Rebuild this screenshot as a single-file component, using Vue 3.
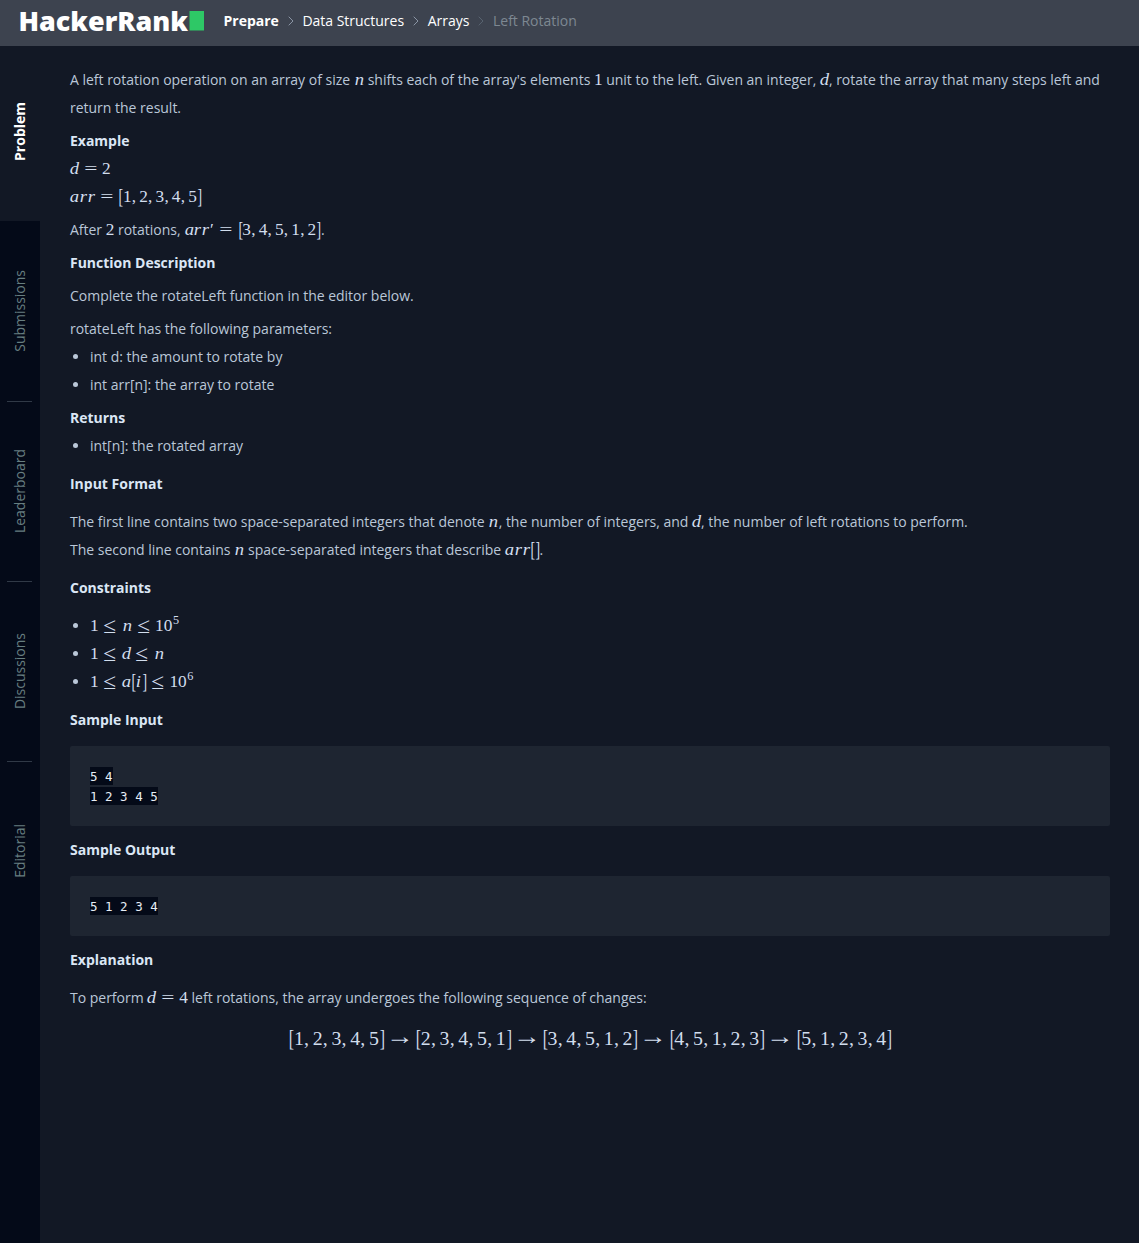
<script setup>
import { h } from 'vue'

const tabs = ['Problem', 'Submissions', 'Leaderboard', 'Discussions', 'Editorial']

const kinds = { '=': 'rel eq', '≤': 'rel le', '→': 'rel to', ',': 'comma', '[': 'br', ']': 'br', '′': 'prime' }

// Typesets a compact formula: letters are italic, ^x raises the next digit.
function Tex({ f }) {
  const out = []
  for (let i = 0; i < f.length; i++) {
    let c = f[i]
    let cls = kinds[c]
    if (c === '^') {
      c = f[++i]
      cls = 'sup'
    } else if (!cls) {
      cls = /[a-z]/.test(c) ? 'var v-' + c : 'num'
    }
    out.push(h('span', { class: ['t', cls] }, [h('span', { class: 'g' }, c)]))
  }
  return h('span', { class: 'tex' }, out)
}
Tex.props = ['f']
</script>

<template>
  <div class="page">
    <header class="top">
      <svg class="logo" width="187" height="26" viewBox="0 0 187 26">
        <text x="0.5" y="21.5" textLength="169.5" lengthAdjust="spacingAndGlyphs">HackerRank</text>
        <rect x="171.5" y="2" width="14.5" height="19.5" fill="#2ec866" />
      </svg>
      <nav class="crumbs">
        <b>Prepare</b>
        <svg class="chev" viewBox="0 0 6 10"><path d="M.7.7 5 5 .7 9.3" /></svg>
        <span class="c2">Data Structures</span>
        <svg class="chev" viewBox="0 0 6 10"><path d="M.7.7 5 5 .7 9.3" /></svg>
        <span class="c3">Arrays</span>
        <svg class="chev dim" viewBox="0 0 6 10"><path d="M.7.7 5 5 .7 9.3" /></svg>
        <span class="last">Left Rotation</span>
      </nav>
    </header>
    <div class="body">
      <aside class="side">
        <div v-for="(t, i) in tabs" :key="t" class="tab" :class="{ active: i === 0 }"><span>{{ t }}</span></div>
      </aside>
      <main class="problem">
        <p>A left rotation operation on an array of size <Tex f="n" /> shifts each of the array's elements <Tex f="1" /> unit to the left. Given an integer, <Tex f="d" />, rotate the array that many steps left and return the result.</p>
        <p><strong>Example</strong></p>
        <p class="tight"><Tex f="d=2" /><br /><Tex f="arr=[1,2,3,4,5]" /></p>
        <p>After <Tex f="2" /> rotations, <Tex f="arr′=[3,4,5,1,2]" />.</p>
        <p><strong>Function Description</strong></p>
        <p>Complete the rotateLeft function in the editor below.</p>
        <p>rotateLeft has the following parameters:</p>
        <ul>
          <li>int d: the amount to rotate by</li>
          <li>int arr[n]: the array to rotate</li>
        </ul>
        <p><strong>Returns</strong></p>
        <ul>
          <li>int[n]: the rotated array</li>
        </ul>
        <h4>Input Format</h4>
        <p class="para">The first line contains two space-separated integers that denote <Tex f="n" />, the number of integers, and <Tex f="d" />, the number of left rotations to perform.<br />The second line contains <Tex f="n" /> space-separated integers that describe <Tex f="arr[]" />.</p>
        <h4>Constraints</h4>
        <ul class="para">
          <li><Tex f="1≤n≤10^5" /></li>
          <li><Tex f="1≤d≤n" /></li>
          <li><Tex f="1≤a[i]≤10^6" /></li>
        </ul>
        <h4>Sample Input</h4>
        <pre><code>5 4
1 2 3 4 5</code></pre>
        <h4>Sample Output</h4>
        <pre><code>5 1 2 3 4</code></pre>
        <h4>Explanation</h4>
        <p class="para">To perform <Tex f="d=4" /> left rotations, the array undergoes the following sequence of changes:</p>
        <div class="display"><Tex f="[1,2,3,4,5]→[2,3,4,5,1]→[3,4,5,1,2]→[4,5,1,2,3]→[5,1,2,3,4]" /></div>
      </main>
    </div>
  </div>
</template>

<style>
body {
  margin: 0;
  background: #121825;
}
</style>

<style scoped>
.page {
  display: flex;
  flex-direction: column;
  height: 1243px;
  font-family: "Open Sans", sans-serif;
  font-size: 14px;
  letter-spacing: -0.01px;
  color: #bac7d8;
  background: #121825;
  overflow: hidden;
}
.top {
  display: flex;
  align-items: flex-start;
  box-sizing: border-box;
  height: 46px;
  padding-left: 18px;
  background: #3d434f;
}
.logo {
  margin-top: 9px;
  flex: none;
  overflow: visible;
}
.logo text {
  font: 800 26.5px "Open Sans", sans-serif;
  letter-spacing: 0;
  fill: #fff;
}
.crumbs {
  display: flex;
  align-items: center;
  height: 40px;
  margin-left: 18.5px;
  color: #fff;
  white-space: nowrap;
}
.chev {
  width: 6px;
  height: 10px;
  margin: 1px 8.8px 0;
  fill: none;
  stroke: #8b95a5;
  stroke-width: 1;
}
.chev.dim {
  stroke: #586370;
}
.last {
  color: #7d8892;
}
.body {
  display: flex;
  flex: 1;
}
.side {
  width: 40px;
  flex: none;
  background: #040a18;
}
.tab {
  display: flex;
  align-items: center;
  justify-content: center;
  box-sizing: border-box;
  height: 180px;
  color: #677e80;
}
.tab span {
  writing-mode: vertical-rl;
  transform: rotate(180deg);
  line-height: 20px;
}
.tab.active {
  height: 175px;
  padding-bottom: 5px;
  background: #121825;
  color: #fff;
  font-weight: 700;
}
.tab:nth-child(n + 3) {
  background: linear-gradient(#303946, #303946) 7px 0 / 25px 1px no-repeat;
}
.problem {
  flex: 1;
  padding: 20px 29px 0 30px;
  line-height: 28px;
}
p,
ul,
h4 {
  margin: 0;
}
p {
  margin-bottom: 5px;
}
p:has(strong) {
  margin-bottom: 0;
}
p:has(strong) + p:not(.tight) {
  margin-top: 5px;
}
p:has(+ ul) {
  margin-bottom: 0;
}
ul {
  padding: 0;
  list-style: none;
  margin-bottom: 5px;
}
li {
  display: flex;
  align-items: center;
  height: 28px;
}
li::before {
  content: "";
  width: 5px;
  height: 5px;
  margin: 0 12px 1px 3px;
  border-radius: 50%;
  background: #bac7d8;
}
strong,
h4 {
  font-size: 14px;
  font-weight: 700;
  color: #dbe6f5;
}
h4 {
  margin: 10px 0;
}
.para {
  margin-bottom: 0;
}
pre {
  box-sizing: border-box;
  margin: 12px 0 0;
  padding: 21px 20px 19px;
  border-radius: 2px;
  background: #1e2531;
  font: 12.5px/20px "DejaVu Sans Mono", monospace;
  letter-spacing: 0;
}
h4:has(+ pre) {
  margin-bottom: 0;
}
pre code {
  font: inherit;
  padding: 2px 0 1px;
  background: #040a18;
  color: #e6edf5;
}
.problem :deep(.tex) {
  font-family: "Liberation Serif", serif;
  font-size: 17.3px;
  letter-spacing: 0;
  line-height: 1;
  color: #d2deee;
  white-space: nowrap;
}
.problem :deep(.t) {
  display: inline-block;
  width: 0.5em;
  text-align: center;
  line-height: 1;
}
.problem :deep(.g) {
  display: inline-block;
}
.problem :deep(.var) {
  font-style: italic;
}
.problem :deep(.var .g) {
  transform: scaleX(1.08);
}
.problem :deep(.v-n) {
  width: 0.6em;
}
.problem :deep(.v-d) {
  width: 0.52em;
}
.problem :deep(.v-a) {
  width: 0.53em;
}
.problem :deep(.v-r) {
  width: 0.46em;
}
.problem :deep(.v-i) {
  width: 0.345em;
}
.problem :deep(.rel) {
  width: 0.778em;
  margin: 0 0.278em;
}
.problem :deep(.rel .g) {
  transform: scaleX(1.35);
}
.problem :deep(.le .g) {
  transform: scale(1.35, 1.3);
}
.problem :deep(.to) {
  width: 1em;
}
.problem :deep(.to .g) {
  transform: translateY(-2px) scale(1.4, 1.2);
}
.problem :deep(.comma) {
  width: 0.278em;
  margin-right: 0.167em;
}
.problem :deep(.br) {
  width: 0.278em;
}
.problem :deep(.br .g) {
  transform: scale(0.8, 1.17);
}
.problem :deep(.prime) {
  width: 0.3em;
}
.problem :deep(.sup) {
  position: relative;
  top: -0.6em;
  width: 0.6em;
  font-size: 0.707em;
}
.display {
  margin-top: 14px;
  text-align: center;
}
.display :deep(.tex) {
  font-size: 19.85px;
}
</style>
